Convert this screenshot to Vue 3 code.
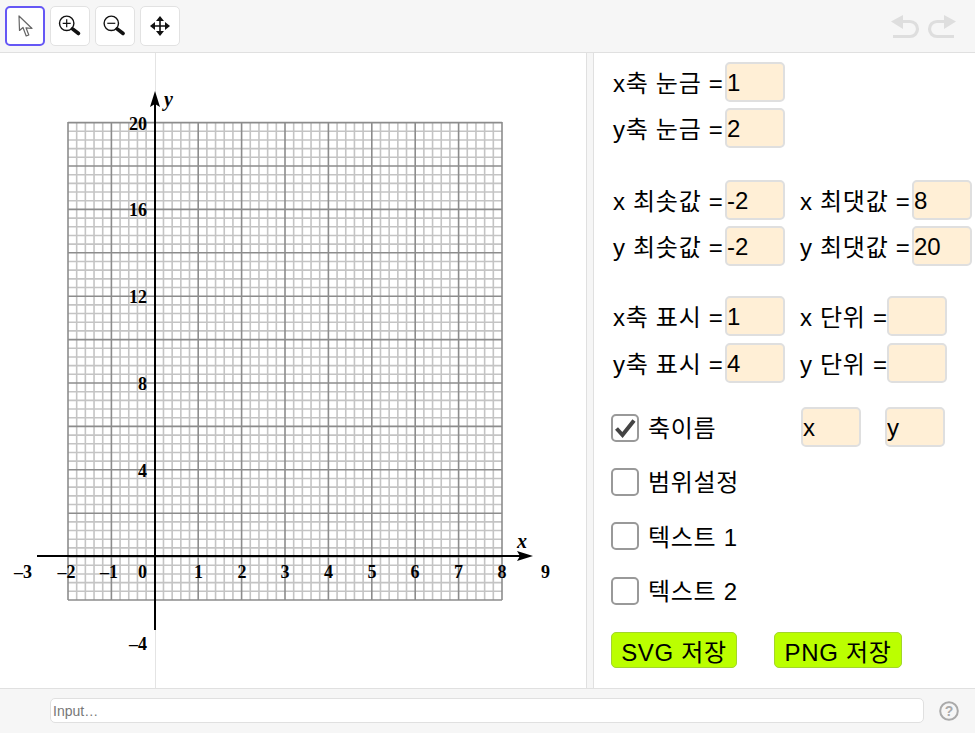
<script setup>
const unit = 43.4
const originX = 155
const originY = 556.6
const left = 68
const right = 502
const top = 122
const bottom = 600
const step = unit / 5

// fine grid: every fifth line is a major one
const vLines = []
for (let i = 0; i <= 50; i++) {
  vLines.push({ x: left + i * step, major: i % 5 === 0 })
}
const hLines = []
for (let i = 0; i <= 55; i++) {
  hLines.push({ y: bottom - i * step, major: i % 5 === 0 })
}

const xLabels = [
  { t: '–3', x: 23 },
  { t: '–2', x: 66.5 },
  { t: '–1', x: 109 },
  { t: '0', x: 142.5 },
  { t: '1', x: 198.5 },
  { t: '2', x: 242 },
  { t: '3', x: 285 },
  { t: '4', x: 328.5 },
  { t: '5', x: 372 },
  { t: '6', x: 415 },
  { t: '7', x: 458.5 },
  { t: '8', x: 502 },
  { t: '9', x: 545.5 }
]
const yLabels = [
  { t: '20', y: 130 },
  { t: '16', y: 216 },
  { t: '12', y: 303 },
  { t: '8', y: 390 },
  { t: '4', y: 477 },
  { t: '–4', y: 650 }
]

const checks = [
  { label: '범위설정' },
  { label: '텍스트 1' },
  { label: '텍스트 2' }
]
</script>

<template>
  <div class="app">
    <div class="toolbar">
      <button class="tool selected">
        <svg width="24" height="26" viewBox="0 0 24 26">
          <path d="M6 3 L6.5 17.5 L10 14.5 L13.2 23 L15.8 22 L13 14.8 L19 15.5 Z" fill="#fff" stroke="#666" stroke-width="1.2" stroke-linejoin="round" />
        </svg>
      </button>
      <button class="tool">
        <svg width="26" height="26" viewBox="0 0 26 26">
          <circle cx="9.7" cy="10.3" r="7.2" fill="none" stroke="#111" stroke-width="1.4" />
          <path d="M5.7 10.3 H13.7 M9.7 6.3 V14.3" stroke="#111" stroke-width="1.2" />
          <path d="M15.5 15.8 L21.5 20.5" stroke="#111" stroke-width="3.6" stroke-linecap="round" />
        </svg>
      </button>
      <button class="tool">
        <svg width="26" height="26" viewBox="0 0 26 26">
          <circle cx="9.3" cy="10.3" r="7.2" fill="none" stroke="#111" stroke-width="1.4" />
          <path d="M5.3 10.3 H13.3" stroke="#111" stroke-width="1.2" />
          <path d="M15.1 15.8 L21.1 20.5" stroke="#111" stroke-width="3.6" stroke-linecap="round" />
        </svg>
      </button>
      <button class="tool">
        <svg width="24" height="24" viewBox="0 0 24 24">
          <path d="M12 5 V19 M5 12 H19" stroke="#111" stroke-width="1.6" />
          <path d="M12 2 L16 7 H8 Z M12 22 L16 17 H8 Z M2 12 L7 8 V16 Z M22 12 L17 8 V16 Z" fill="#111" />
        </svg>
      </button>
      <div class="history">
        <svg width="30" height="26" viewBox="0 0 30 26">
          <path d="M8 6.5 H20 A7.5 7.5 0 0 1 20 21.5 H3" fill="none" stroke="#dedede" stroke-width="3.2" />
          <path d="M1 6.5 L13 0 V14 Z" fill="#dedede" />
        </svg>
        <svg width="30" height="26" viewBox="0 0 30 26">
          <path d="M22 6.5 H10 A7.5 7.5 0 0 0 10 21.5 H27" fill="none" stroke="#dedede" stroke-width="3.2" />
          <path d="M29 6.5 L17 0 V14 Z" fill="#dedede" />
        </svg>
      </div>
    </div>

    <div class="main">
      <div class="canvas">
        <svg class="graph" width="586" height="635" viewBox="0 53 586 635">
          <line x1="155.5" y1="53" x2="155.5" y2="688" stroke="#e4e4e4" />
          <line v-for="l in vLines.filter(v => !v.major)" :key="'v' + l.x" :x1="l.x" :x2="l.x" :y1="top" :y2="bottom" stroke="#c4c4c4" stroke-width="1.6" />
          <line v-for="l in hLines.filter(h => !h.major)" :key="'h' + l.y" :y1="l.y" :y2="l.y" :x1="left" :x2="right" stroke="#c4c4c4" stroke-width="1.6" />
          <line v-for="l in vLines.filter(v => v.major)" :key="'V' + l.x" :x1="l.x" :x2="l.x" :y1="top" :y2="bottom" stroke="#8c8c8c" stroke-width="1.6" />
          <line v-for="l in hLines.filter(h => h.major)" :key="'H' + l.y" :y1="l.y" :y2="l.y" :x1="left" :x2="right" stroke="#8c8c8c" stroke-width="1.6" />

          <line x1="37" :y1="originY - 0.6" x2="520" :y2="originY - 0.6" stroke="#000" stroke-width="2" />
          <line :x1="originX" y1="630" :x2="originX" y2="100" stroke="#000" stroke-width="2" />
          <path d="M533 556 L517 551 L520 556 L517 561 Z" fill="#000" />
          <path d="M155 91 L150 107 L155 104 L160 107 Z" fill="#000" />

          <text v-for="l in xLabels" :key="'xl' + l.t" :x="l.x" y="578" class="tick" text-anchor="middle">{{ l.t }}</text>
          <text v-for="l in yLabels" :key="'yl' + l.t" x="147" :y="l.y" class="tick" text-anchor="end">{{ l.t }}</text>
          <text x="517" y="548" class="axis-name">x</text>
          <text x="164" y="106" class="axis-name">y</text>
        </svg>
      </div>

      <div class="splitter"></div>

      <div class="panel">
        <div class="group">
          <div class="row">
            <label class="lbl col1">x축 눈금 =</label>
            <input class="box" value="1" readonly />
          </div>
          <div class="row">
            <label class="lbl col1">y축 눈금 =</label>
            <input class="box" value="2" readonly />
          </div>
        </div>

        <div class="group range">
          <div class="row">
            <label class="lbl col1">x 최솟값 =</label>
            <input class="box" value="-2" readonly />
            <label class="lbl col2">x 최댓값 =</label>
            <input class="box" value="8" readonly />
          </div>
          <div class="row">
            <label class="lbl col1">y 최솟값 =</label>
            <input class="box" value="-2" readonly />
            <label class="lbl col2">y 최댓값 =</label>
            <input class="box" value="20" readonly />
          </div>
        </div>

        <div class="group marks">
          <div class="row">
            <label class="lbl col1">x축 표시 =</label>
            <input class="box" value="1" readonly />
            <label class="lbl col3">x 단위 =</label>
            <input class="box" value="" readonly />
          </div>
          <div class="row">
            <label class="lbl col1">y축 표시 =</label>
            <input class="box" value="4" readonly />
            <label class="lbl col3">y 단위 =</label>
            <input class="box" value="" readonly />
          </div>
        </div>

        <div class="checks">
          <div class="row check-row">
            <span class="check">
              <svg width="24" height="24" viewBox="0 0 24 24">
                <path d="M3.5 12.5 L9.5 19 L21 4.5" fill="none" stroke="#444" stroke-width="4" />
              </svg>
            </span>
            <span class="check-label name-label">축이름</span>
            <input class="box" value="x" readonly />
            <input class="box name-y" value="y" readonly />
          </div>
          <div v-for="c in checks" :key="c.label" class="row check-row">
            <span class="check"></span>
            <span class="check-label">{{ c.label }}</span>
          </div>
        </div>

        <div class="actions">
          <button class="save svg-btn">SVG 저장</button>
          <button class="save png-btn">PNG 저장</button>
        </div>
      </div>
    </div>

    <div class="inputbar">
      <input class="algebra" placeholder="Input…" />
      <svg class="help" width="20" height="20" viewBox="0 0 20 20">
        <circle cx="10" cy="10" r="8.8" fill="none" stroke="#aaa" stroke-width="2" />
        <text x="10" y="15" text-anchor="middle" class="help-mark">?</text>
      </svg>
    </div>
  </div>
</template>

<style>
body {
  background: #fff;
}
</style>

<style scoped>
.app {
  width: 975px;
  height: 733px;
  display: flex;
  flex-direction: column;
  font-family: "Liberation Sans", "Noto Sans CJK KR", sans-serif;
  color: #000;
  overflow: hidden;
}

.toolbar {
  height: 53px;
  box-sizing: border-box;
  border-bottom: 1px solid #e0e0e0;
  background: #f6f6f6;
  display: flex;
  align-items: flex-start;
  gap: 5px;
  padding: 6px 0 0 5px;
}
.tool {
  width: 40px;
  height: 40px;
  box-sizing: border-box;
  padding: 0;
  border: 1px solid #e2e2e2;
  border-radius: 5px;
  background: #fff;
  display: flex;
  align-items: center;
  justify-content: center;
}
.tool.selected {
  border: 2px solid #6557f5;
}
.history {
  margin-left: auto;
  display: flex;
  gap: 7px;
  padding: 9px 18px 0 0;
}

.main {
  height: 635px;
  display: flex;
}
.canvas {
  width: 586px;
  height: 635px;
  background: #fff;
}
.graph {
  display: block;
}
.tick {
  font-family: "Liberation Serif", serif;
  font-weight: bold;
  font-size: 18px;
  fill: #000;
}
.axis-name {
  font-family: "Liberation Serif", serif;
  font-weight: bold;
  font-style: italic;
  font-size: 20px;
  fill: #000;
}
.splitter {
  width: 8px;
  box-sizing: border-box;
  background: #f6f6f6;
  border-left: 1px solid #e0e0e0;
  border-right: 1px solid #e0e0e0;
}

.panel {
  flex: 1;
  padding: 9px 0 0 17px;
  font-size: 24px;
}
.group {
  display: flex;
  flex-direction: column;
  gap: 6px;
}
.range {
  margin-top: 32px;
}
.marks {
  margin-top: 30px;
  gap: 7px;
}
.row {
  display: flex;
  align-items: center;
  height: 40px;
}
.lbl {
  flex: none;
  box-sizing: border-box;
  white-space: nowrap;
  padding: 0 0 2px 1px;
  letter-spacing: 0.7px;
}
.col1 {
  width: 114px;
  padding-left: 2px;
}
.col2 {
  width: 113px;
  margin-left: 14px;
}
.col3 {
  width: 88px;
  margin-left: 14px;
}
.box {
  flex: none;
  width: 60px;
  height: 40px;
  box-sizing: border-box;
  padding: 2px 0 0;
  border: 2px solid #dfdfdf;
  border-radius: 5px;
  background: #ffefd6;
  font: inherit;
  color: #000;
  outline: none;
}

.checks {
  margin-top: 24px;
  display: flex;
  flex-direction: column;
  gap: 14.4px;
}
.check {
  flex: none;
  width: 28px;
  height: 28px;
  box-sizing: border-box;
  margin-top: 1px;
  border: 2px solid #999;
  border-radius: 5px;
  background: #fff;
  display: flex;
  align-items: center;
  justify-content: center;
}
.check-label {
  margin-left: 9px;
  padding-bottom: 1px;
  white-space: nowrap;
  letter-spacing: 0.7px;
}
.name-label {
  width: 153px;
}
.name-y {
  margin-left: 24px;
}

.actions {
  margin-top: 22px;
  display: flex;
  gap: 37px;
}
.save {
  height: 36px;
  box-sizing: border-box;
  padding: 0 0 3px;
  border: 1px solid #a3d62a;
  border-radius: 5px;
  background: #bbff00;
  font: inherit;
  letter-spacing: 0.7px;
  color: #000;
}
.svg-btn {
  width: 126px;
}
.png-btn {
  width: 128px;
}

.inputbar {
  height: 45px;
  box-sizing: border-box;
  border-top: 1px solid #e0e0e0;
  background: #f6f6f6;
  display: flex;
  align-items: flex-start;
  padding: 9px 0 0 50px;
}
.algebra {
  width: 874px;
  height: 25px;
  box-sizing: border-box;
  border: 1px solid #e0e0e0;
  border-radius: 5px;
  background: #fff;
  padding: 0 2px;
  font-family: "Liberation Sans", sans-serif;
  font-size: 14px;
  outline: none;
}
.algebra::placeholder {
  color: #777;
  opacity: 1;
}
.help {
  margin: 3px 0 0 15px;
}
.help-mark {
  font-family: "Liberation Sans", sans-serif;
  font-weight: bold;
  font-size: 14px;
  fill: #aaa;
}
</style>
